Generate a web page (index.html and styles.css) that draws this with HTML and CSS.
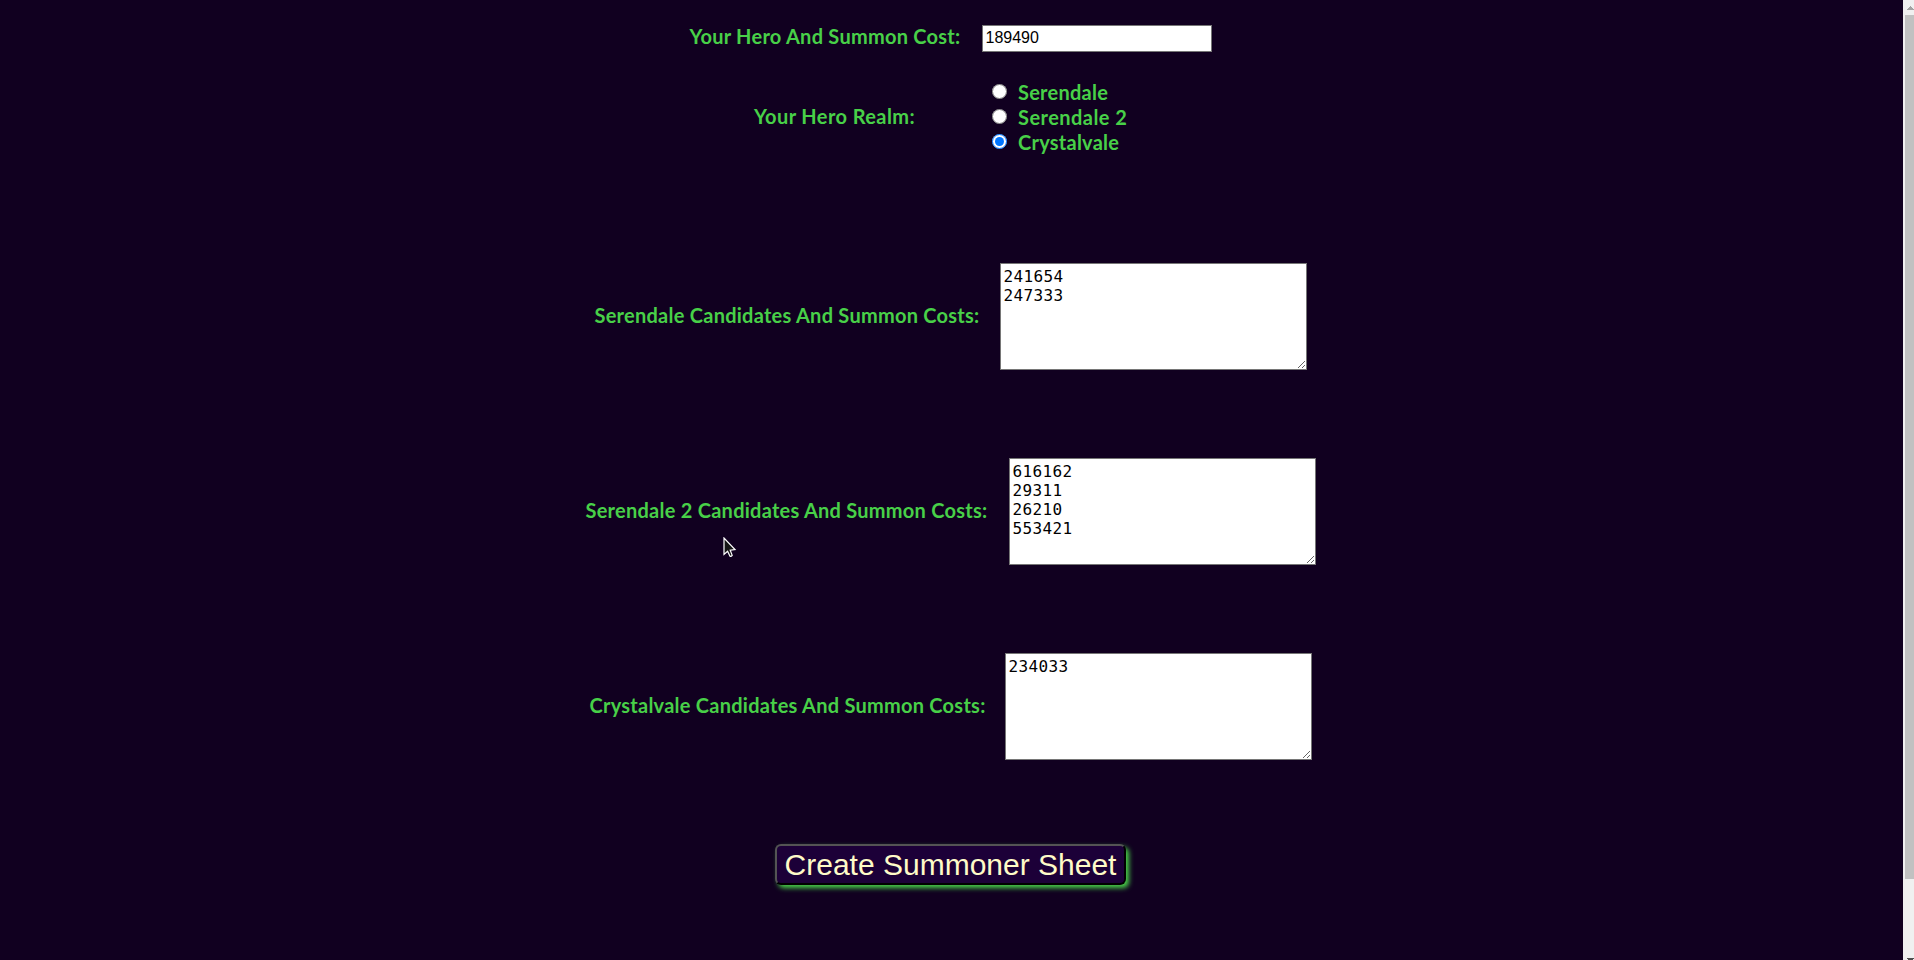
FILE: index.html
```html
<!DOCTYPE html>
<html lang="en">
<head>
<meta charset="utf-8">
<title>Create Summoner Sheet</title>
<link rel="stylesheet" href="styles.css">
</head>
<body>
<form class="page">
  <div class="row row-hero">
    <label class="label label-hero" for="hero">Your Hero And Summon Cost:</label>
    <input class="hero-input" id="hero" type="text" value="189490">
  </div>
  <div class="row row-realm">
    <span class="label label-realm">Your Hero Realm:</span>
    <div class="realms">
      <label class="realm"><input class="radio" type="radio" name="realm"><span class="label label-sd">Serendale</span></label>
      <label class="realm"><input class="radio" type="radio" name="realm"><span class="label label-sd2">Serendale 2</span></label>
      <label class="realm"><input class="radio" type="radio" name="realm" checked><span class="label label-cv">Crystalvale</span></label>
    </div>
  </div>
  <div class="row row-area">
    <label class="label label-area-sd" for="sd">Serendale Candidates And Summon Costs:</label>
    <textarea class="area" id="sd">241654
247333</textarea>
  </div>
  <div class="row row-area">
    <label class="label label-area-sd2" for="sd2">Serendale 2 Candidates And Summon Costs:</label>
    <textarea class="area" id="sd2">616162
29311
26210
553421</textarea>
  </div>
  <div class="row row-area">
    <label class="label label-area-cv" for="cv">Crystalvale Candidates And Summon Costs:</label>
    <textarea class="area" id="cv">234033</textarea>
  </div>
  <button class="submit" type="button">Create Summoner Sheet</button>
</form>
<div class="scrollbar">
  <svg class="arrow" width="7" height="4" viewBox="0 0 7 4"><path d="M3 0h1v1h1v1h1v1h1v1H0V3h1V2h1V1h1z" fill="#a3a3a3"/></svg>
  <div class="thumb"></div>
  <svg class="arrow-down" width="7" height="2" viewBox="0 0 7 2"><path d="M0 0h7v1H6v1H1V1H0z" fill="#505050"/></svg>
</div>
<svg class="cursor" width="14" height="21" viewBox="0 0 14 21"><path d="M1 1V17.5L4.6 14.3L7 19.2Q8.2 19.7 9.2 18.3L7.2 13.2L12 12.6Z" fill="#151515" stroke="#fff" stroke-width="1.2"/></svg>
</body>
</html>
```
FILE: styles.css
```css
* { box-sizing: border-box; }
html { height: 960px; overflow: hidden; }
body {
  margin: 0;
  height: 960px;
  display: flex;
  overflow: hidden;
  background: #110020;
}
.page {
  flex: 1;
  padding-right: 2px;
  display: flex;
  flex-direction: column;
  align-items: center;
}
.row {
  display: flex;
  align-items: center;
  justify-content: center;
}
.label {
  font: bold 20px/24px Lato, sans-serif;
  letter-spacing: 0.25px;
  color: #48d048;
  white-space: nowrap;
}
.row > .label { padding-bottom: 4px; }
.row-hero { height: 27px; margin-top: 25px; gap: 21px; }
.row-hero > .label-hero { width: 271px; padding-bottom: 5px; }
.hero-input {
  width: 230px;
  height: 27px;
  margin: 0;
  padding: 1px 3px 3px;
  border: 1px solid #767676;
  background: #fff;
  font: 16px "Liberation Sans", Arial, sans-serif;
  color: #000;
}
.row-realm { margin-top: 27px; gap: 77px; padding-right: 9px; }
.row-realm > .label-realm { width: 161px; letter-spacing: 0.4px; padding-bottom: 2px; }
.realms { width: 146px; display: flex; flex-direction: column; }
.realm { height: 25px; display: flex; align-items: flex-start; gap: 11px; }
.realm .label { padding-top: 1px; }
.label-sd2 { letter-spacing: 0.45px; }
.radio { width: 15px; height: 15px; margin: 5px 0 0; }
.row-area { height: 107px; gap: 20px; margin-bottom: 88px; }
.row-realm + .row-area { margin-top: 109px; }
.area {
  width: 307px;
  height: 107px;
  margin: 0;
  padding: 3px;
  border: 1px solid #767676;
  background: #fff;
  color: #000;
  font: 16px/19px "DejaVu Sans Mono", monospace;
  letter-spacing: 0.37px;
}
.label-area-sd { width: 385px; }
.label-area-sd2 { width: 403px; }
.label-area-cv { width: 395px; }
.submit {
  width: 351px;
  height: 41px;
  margin: -4px 0 0;
  padding: 0;
  border: 2px outset #000;
  border-radius: 6px;
  background: #1c0038;
  color: #fffbc8;
  font: 30px "Liberation Sans", Arial, sans-serif;
  white-space: nowrap;
  box-shadow: 3px 3px 5px #48d048;
}
.scrollbar {
  width: 11px;
  padding: 6px 0 0 2px;
  display: flex;
  flex-direction: column;
  background: #f0f0f0;
}
.arrow { margin-left: 2px; }
.thumb { height: 864px; margin-top: 5px; background: #c1c1c1; }
.arrow-down { margin: auto 0 0 2px; }
.cursor { position: absolute; left: 723px; top: 537px; }
```
